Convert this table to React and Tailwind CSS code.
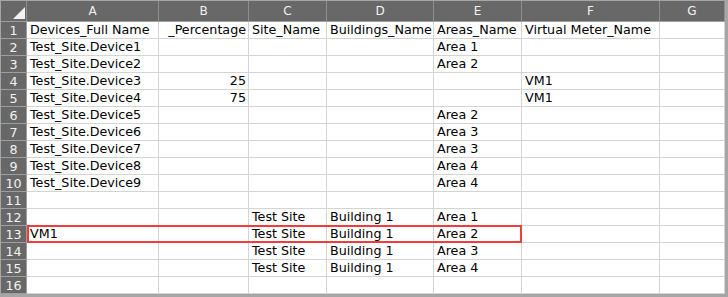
const cols = [
  { key: "A", w: "w-[132px]" },
  { key: "B", w: "w-[90px]" },
  { key: "C", w: "w-[78px]" },
  { key: "D", w: "w-[107px]" },
  { key: "E", w: "w-[88px]" },
  { key: "F", w: "w-[138px]" },
  { key: "G", w: "w-[65px]" },
];

const rows = [
  ["Devices_Full Name", "_Percentage", "Site_Name", "Buildings_Name", "Areas_Name", "Virtual Meter_Name", ""],
  ["Test_Site.Device1", "", "", "", "Area 1", "", ""],
  ["Test_Site.Device2", "", "", "", "Area 2", "", ""],
  ["Test_Site.Device3", "25", "", "", "", "VM1", ""],
  ["Test_Site.Device4", "75", "", "", "", "VM1", ""],
  ["Test_Site.Device5", "", "", "", "Area 2", "", ""],
  ["Test_Site.Device6", "", "", "", "Area 3", "", ""],
  ["Test_Site.Device7", "", "", "", "Area 3", "", ""],
  ["Test_Site.Device8", "", "", "", "Area 4", "", ""],
  ["Test_Site.Device9", "", "", "", "Area 4", "", ""],
  ["", "", "", "", "", "", ""],
  ["", "", "Test Site", "Building 1", "Area 1", "", ""],
  ["VM1", "", "Test Site", "Building 1", "Area 2", "", ""],
  ["", "", "Test Site", "Building 1", "Area 3", "", ""],
  ["", "", "Test Site", "Building 1", "Area 4", "", ""],
  ["", "", "", "", "", "", ""],
];

export default function App() {
  return (
    <div className="w-[728px] h-[297px] bg-white overflow-hidden">
      <div
        className="relative w-[728px] h-[297px] border-l border-t border-r-[3px] border-b-[3px] border-[#a6a6a6] bg-white text-[12.7px] text-black"
        style={{ fontFamily: '"DejaVu Sans", Verdana, sans-serif' }}
      >
        {/* header row */}
        <div className="flex h-[21px] bg-[#686868] border-b border-[#9e9e9e]">
          <div className="relative w-[26px] h-full border-r border-[#8e8e8e]">
            <div
              className="absolute left-[12px] top-[6px] w-[12px] h-[12px] bg-[#f2f2f2]"
              style={{ clipPath: "polygon(100% 0, 100% 100%, 0 100%)" }}
            />
          </div>
          {cols.map((c) => (
            <div
              key={c.key}
              className={`${c.w} h-full border-r border-[#8e8e8e] flex items-center justify-center text-[#f2f2f2] text-[12px]`}
            >
              {c.key}
            </div>
          ))}
        </div>
        {rows.map((r, i) => (
          <div key={i} className="flex h-[17px]">
            <div className="w-[26px] h-full bg-[#686868] border-r border-b border-[#9e9e9e] flex items-center justify-center text-[#f2f2f2] pt-px">
              {i + 1}
            </div>
            {cols.map((c, j) => (
              <div
                key={c.key}
                className={`${c.w} h-full border-r border-b border-[#d4d4d4] flex items-center whitespace-nowrap overflow-hidden leading-none pt-px ${
                  j === 1 ? "justify-end pr-[2px]" : "pl-[3px]"
                }`}
              >
                {r[j]}
              </div>
            ))}
          </div>
        ))}
        {/* highlight box */}
        <div className="absolute left-[26px] top-[224px] w-[495px] h-[18px] border-2 border-[#f03c3c]" />
      </div>
    </div>
  );
}
